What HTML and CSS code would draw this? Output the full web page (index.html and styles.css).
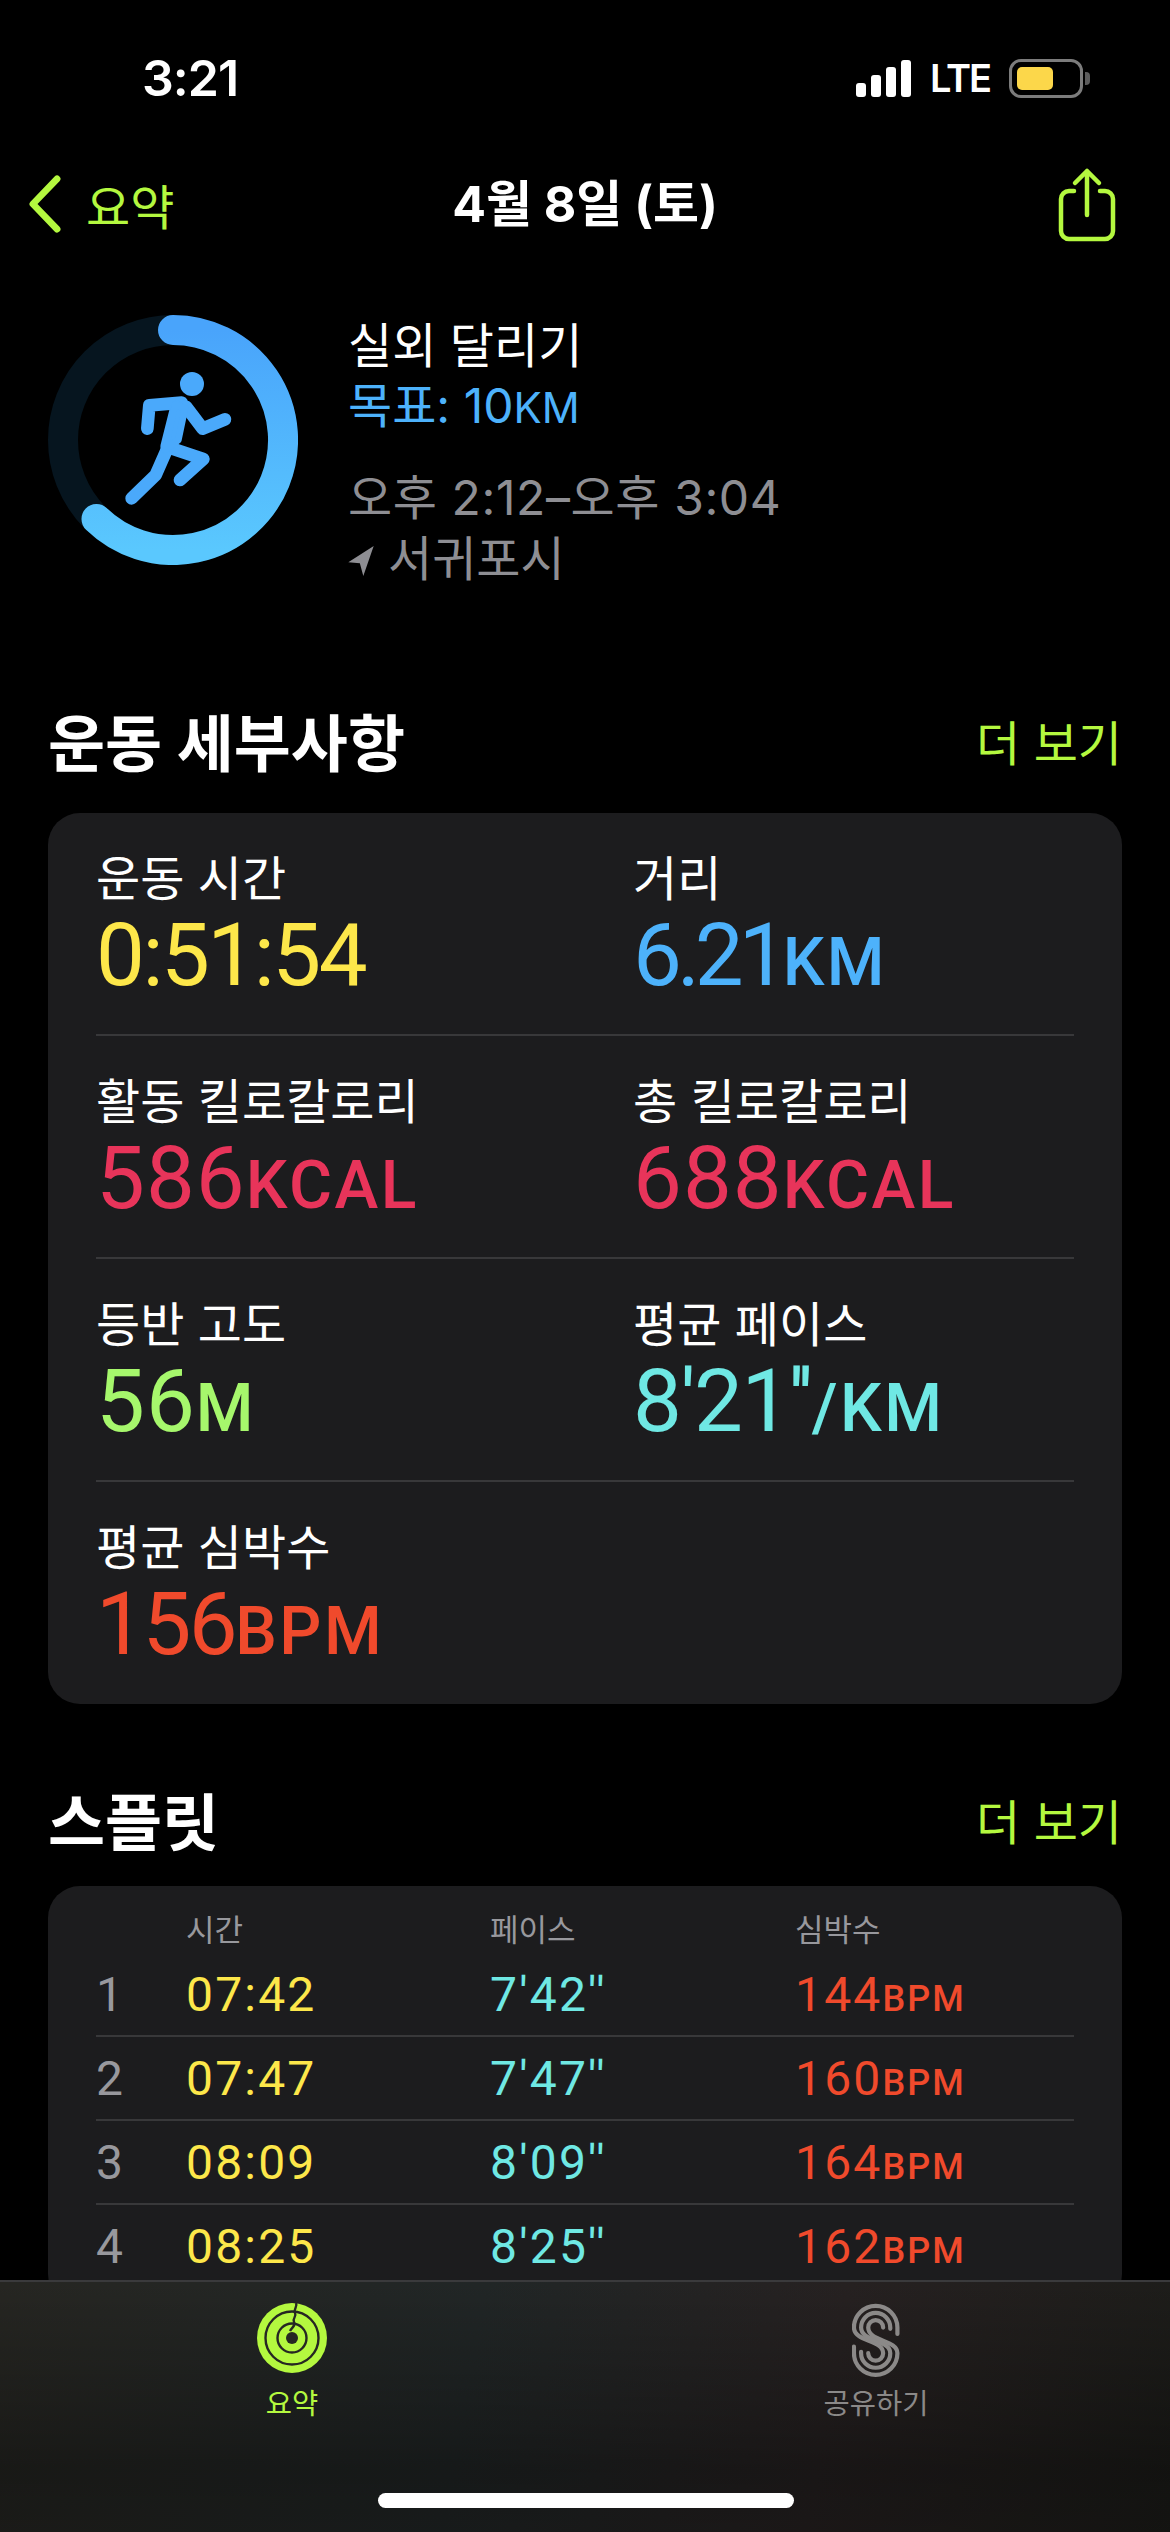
FILE: index.html
```html
<!DOCTYPE html>
<html lang="ko">
<head>
  <meta charset="UTF-8" />
  <meta name="viewport" content="width=device-width, initial-scale=1" />
  <title>실외 달리기</title>
  <link rel="stylesheet" href="styles.css">
</head>
<body>
  <div class="status">
    <span class="clock">3:21</span>
    <div class="status-right">
      <div class="signal"><i class="b1"></i><i class="b2"></i><i class="b3"></i><i class="b4"></i></div>
      <span class="lte">LTE</span>
      <div class="battery"><div class="battery-fill"></div></div>
      <div class="battery-nub"></div>
    </div>
  </div>

  <div class="nav">
    <div class="nav-back">
      <svg class="chevron" viewBox="0 0 36 60"><path d="M31 4 6 30l25 26" /></svg>
      <span>요약</span>
    </div>
    <h1>4월 8일 (토)</h1>
    <svg class="share" viewBox="0 0 60 76">
      <path d="M17 24H12a8 8 0 0 0-8 8v32a8 8 0 0 0 8 8h36a8 8 0 0 0 8-8V32a8 8 0 0 0-8-8h-5" />
      <path d="M30 48V4M18 16 30 4l12 12" />
    </svg>
  </div>

  <div class="workout">
    <svg class="ring" viewBox="0 0 250 250">
      <defs>
        <linearGradient id="ringGrad" x1="0" y1="0" x2="0" y2="1">
          <stop offset="0" stop-color="#49a4fb" />
          <stop offset="1" stop-color="#5ac8fe" />
        </linearGradient>
      </defs>
      <circle cx="125" cy="125" r="110" fill="none" stroke="#06151f" stroke-width="30" />
      <path d="M125 15A110 110 0 1 1 48.5 204" fill="none" stroke="url(#ringGrad)" stroke-width="30" stroke-linecap="round" />
      <!-- runner, coords from the crop -->
      <g transform="translate(62 35) scale(.3333)" fill="none" stroke="#4aa9fb" stroke-width="38" stroke-linecap="round" stroke-linejoin="round">
        <circle cx="246" cy="102" r="36" fill="#4aa9fb" stroke="none" />
        <path d="M112 236 118 166 215 158" />
        <path d="M228 170 278 236 345 208" />
        <path d="M200 170 170 290 280 327 210 390" />
        <path d="M170 300 137 375 65 445" />
        <path d="M195 165 225 175 205 270 165 300Z" fill="#4aa9fb" stroke-width="20" />
      </g>
    </svg>
    <div class="workout-info">
      <div class="workout-name">실외 달리기</div>
      <div class="workout-goal">목표: 10<span class="goal-unit">KM</span></div>
      <div class="workout-time">오후 2:12–오후 3:04</div>
      <div class="workout-place">
        <svg class="arrow" viewBox="0 0 22 26"><path d="M22 0 0 14l10 1 3 11Z" /></svg>
        <span>서귀포시</span>
      </div>
    </div>
  </div>

  <div class="section-head first">
    <h2>운동 세부사항</h2>
    <span class="more">더 보기</span>
  </div>
  <div class="card">
    <div class="metrics">
      <div class="metric">
        <div class="metric-label">운동 시간</div>
        <div class="metric-value yellow tight">0:51:54</div>
      </div>
      <div class="metric">
        <div class="metric-label">거리</div>
        <div class="metric-value blue tighter">6.21<span class="unit">KM</span></div>
      </div>
      <div class="metric">
        <div class="metric-label">활동 킬로칼로리</div>
        <div class="metric-value pink wide">586<span class="unit">KCAL</span></div>
      </div>
      <div class="metric">
        <div class="metric-label">총 킬로칼로리</div>
        <div class="metric-value pink wide">688<span class="unit">KCAL</span></div>
      </div>
      <div class="metric">
        <div class="metric-label">등반 고도</div>
        <div class="metric-value green wide">56<span class="unit">M</span></div>
      </div>
      <div class="metric">
        <div class="metric-label">평균 페이스</div>
        <div class="metric-value teal">8'21''<span class="unit">/KM</span></div>
      </div>
      <div class="metric last">
        <div class="metric-label">평균 심박수</div>
        <div class="metric-value red tight">156<span class="unit">BPM</span></div>
      </div>
    </div>
  </div>

  <div class="section-head second">
    <h2>스플릿</h2>
    <span class="more">더 보기</span>
  </div>
  <div class="card splits">
    <div class="split-row split-head">
      <span></span><span>시간</span><span>페이스</span><span>심박수</span>
    </div>
    <div class="split-row">
      <span class="num">1</span><span class="yellow">07:42</span><span class="teal">7'42''</span><span class="red">144<small>BPM</small></span>
    </div>
    <div class="split-row">
      <span class="num">2</span><span class="yellow">07:47</span><span class="teal">7'47''</span><span class="red">160<small>BPM</small></span>
    </div>
    <div class="split-row">
      <span class="num">3</span><span class="yellow">08:09</span><span class="teal">8'09''</span><span class="red">164<small>BPM</small></span>
    </div>
    <div class="split-row">
      <span class="num">4</span><span class="yellow">08:25</span><span class="teal">8'25''</span><span class="red">162<small>BPM</small></span>
    </div>
  </div>

  <div class="tabbar">
    <div class="tabs">
      <div class="tab active">
        <svg class="tab-rings" viewBox="0 0 72 72">
          <circle cx="36" cy="36" r="35" fill="#b4f83f" />
          <circle cx="36" cy="36" r="26.5" fill="none" stroke="#262723" stroke-width="2.4" />
          <circle cx="36" cy="36" r="14.5" fill="none" stroke="#262723" stroke-width="2.4" />
          <circle cx="36" cy="36" r="6" fill="#262723" />
          <path d="M40 1c2 4-3 6-1 10s-3 5-1 9-2 5-4 9" fill="none" stroke="#262723" stroke-width="2.4" />
        </svg>
        <span>요약</span>
      </div>
      <div class="tab">
        <svg class="tab-share" viewBox="215 92 148 232" fill="none" stroke="#8b8988" stroke-width="13" stroke-linecap="round">
          <path d="M355 188V168A67 67 0 0 0 221 168C221 212 311 205 311 247A23 23 0 0 1 265 247" />
          <path d="M333 172V168A45 45 0 0 0 243 168C243 212 333 205 333 247A45 45 0 0 1 243 247V243" />
          <path d="M311 168A23 23 0 0 0 265 168C265 212 355 205 355 247A67 67 0 0 1 221 247V227" />
        </svg>
        <span>공유하기</span>
      </div>
    </div>
    <div class="home-bar"></div>
  </div>
</body>
</html>
```

FILE: styles.css
```css
/* RESET */
* { margin:0; padding:0; box-sizing:border-box }
html, body { width:1170px; height:2532px }
body {
  position:relative;
  overflow:hidden;
  background:#000;
  color:#fff;
  font-family:Inter,"Noto Sans CJK KR",sans-serif;
}

/* status bar */
.status {
  display:flex; align-items:center; justify-content:space-between;
  height:156px; padding:0 80px 0 142px;
}
.clock { font-size:50px; font-weight:600; letter-spacing:-1px }
.status-right { display:flex; align-items:center }
.signal { display:flex; align-items:flex-end; gap:5px; height:37px }
.signal i { display:block; width:10px; background:#fff; border-radius:3px }
.b1 { height:14px }
.b2 { height:22px }
.b3 { height:30px }
.b4 { height:37px }
.lte { margin:0 19px 0 19px; font-size:38px; font-weight:600; letter-spacing:-2px }
.battery {
  width:74px; height:39px; padding:5px 5px;
  border:3px solid #7c7c7c; border-radius:12px;
}
.battery-fill { width:36px; height:100%; background:#fcd74a; border-radius:5px }
.battery-nub { width:5px; height:13px; margin-left:2px; background:#5c5c5c; border-radius:0 4px 4px 0 }

/* nav */
.nav {
  position:relative;
  display:flex; align-items:center; justify-content:space-between;
  height:96px; padding:0 53px 0 27px;
}
.nav-back { display:flex; align-items:center; gap:24px; color:#b4f83f; font-size:48px }
.chevron { width:35px; height:58px; fill:none; stroke:#b4f83f; stroke-width:7; stroke-linecap:round; stroke-linejoin:round }
.nav h1 {
  position:absolute; left:0; right:0; top:18px;
  text-align:center; font-size:50px; font-weight:700; line-height:60px;
}
.share { width:60px; height:76px; margin-top:2px; fill:none; stroke:#b4f83f; stroke-width:4.5; stroke-linecap:round; stroke-linejoin:round }

/* workout summary */
.workout { display:flex; gap:50px; padding:63px 48px 0 48px; height:415px }
.ring { width:250px; height:250px; flex:none }
.workout-info { font-size:48px; line-height:60px; margin-top:1px }
.workout-goal { color:#4db2fb; margin-bottom:30px }
.goal-unit { font-size:42px }
.workout-time { color:#8e8e93; letter-spacing:.6px }
.workout-place { display:flex; align-items:center; gap:14px; color:#8e8e93; margin-top:1px }
.arrow { width:26px; height:30px; fill:#8e8e93; margin-top:4px }

/* sections */
.section-head {
  display:flex; align-items:center; justify-content:space-between;
  padding:0 48px;
}
.section-head.first { height:146px }
.section-head.second { height:134px; margin-top:48px }
.section-head h2 { font-size:62px; font-weight:700 }
.more { color:#b4f83f; font-size:48px }

.card { margin:0 48px; background:#1c1c1e; border-radius:32px; padding:0 48px }
.metrics { display:grid; grid-template-columns:537px 1fr }
.metric { height:223px; padding-top:34px; border-bottom:2px solid #38383a }
.metric.last { border-bottom:none; height:222px }
.metric-label { font-size:48px; line-height:64px }
.metric-value { font-family:Roboto,sans-serif; font-size:87px; line-height:100px; letter-spacing:-1.5px; margin-top:-6px }
.metric-value.wide { letter-spacing:1px }
.metric-value.tight { letter-spacing:-2.5px }
.metric-value.tighter { letter-spacing:-5px }
.unit { font-size:66px; font-weight:500; letter-spacing:2.5px }

.yellow { color:#fde74a }
.blue { color:#4db2fb }
.pink { color:#e8345a }
.green { color:#a6f76c }
.teal { color:#6fe8e4 }
.red { color:#f04a2c }

/* splits table */
.splits { height:420px }
.split-row {
  display:grid; grid-template-columns:90px 304px 305px 1fr;
  align-items:center;
  height:84px;
  font-family:Roboto,sans-serif; font-size:48px; letter-spacing:2.2px;
  border-bottom:2px solid #38383a;
}
.split-row small { font-size:36px; font-weight:500; letter-spacing:2px }
.split-head {
  height:68px; padding-top:15px; border-bottom:none; letter-spacing:0;
  font-family:Inter,"Noto Sans CJK KR",sans-serif; font-size:31px; color:#98989d;
}
.split-row:first-child + .split-row { height:83px }
.num { color:#98989d }

/* tab bar */
.tabbar {
  position:absolute; left:0; right:0; top:2280px; bottom:0;
  background:
    linear-gradient(180deg,rgba(0,0,0,0) 0%,rgba(0,0,0,.35) 75%,rgba(0,0,0,.3) 100%),
    linear-gradient(100deg,#262622 0%,#212626 40%,#262121 70%,#1c1c19 100%);
  border-top:2px solid #3a3a3c;
}
.tabs { display:grid; grid-template-columns:584px 584px }
.tab {
  position:relative;
  display:flex; flex-direction:column; align-items:center;
  height:150px; padding-top:20px;
  color:#8b8988; font-size:28.5px;
}
.tab.active { color:#b4f83f }
.tab span { position:absolute; top:102px; line-height:40px }
.tab-rings { width:72px; height:72px }
.tab-share { width:48px; height:77px }
.home-bar {
  position:absolute; left:378px; bottom:24px;
  width:416px; height:15px; background:#fff; border-radius:8px;
}
```
